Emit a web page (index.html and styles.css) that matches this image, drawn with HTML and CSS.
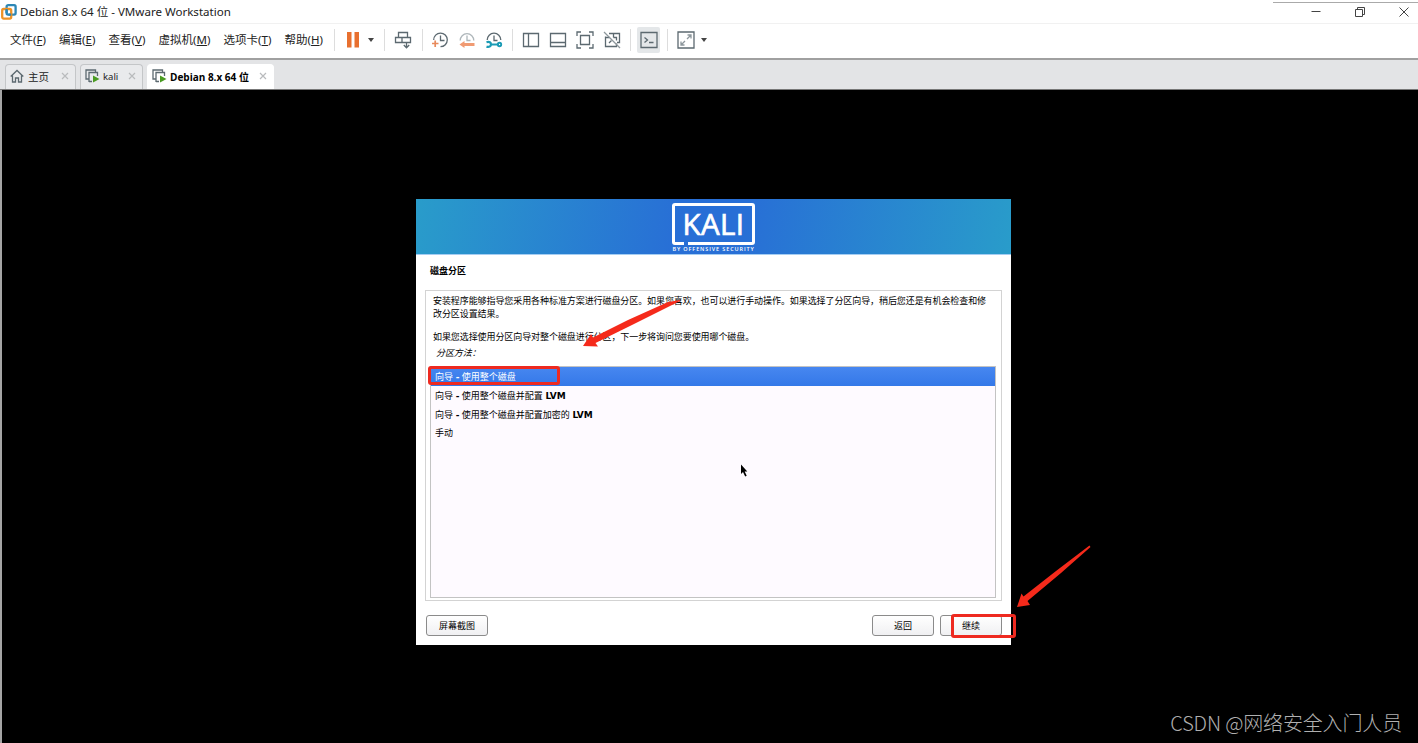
FILE: index.html
```html
<!DOCTYPE html>
<html lang="zh-CN">
  <head>
    <meta charset="UTF-8" />
    <meta name="viewport" content="width=device-width, initial-scale=1.0" />
    <title>Debian 8.x 64 位 - VMware Workstation</title>
    <link rel="stylesheet" href="styles.css">
  </head>
  <body>
    <div class="window">
      <header class="titlebar">
        <svg class="app-icon" width="16" height="16" viewBox="0 0 16 16" fill="none" stroke-width="2.3">
          <rect x="5.6" y="1.2" width="9" height="9.4" rx="1.5" stroke="#2d87b5" />
          <rect x="1.2" y="5" width="9" height="9.6" rx="1.5" stroke="#ee9326" />
          <path d="M5.6 9V5M10.2 10.6h-2.6" stroke="#2d87b5" />
        </svg>
        <span class="title">Debian 8.x 64 位 - VMware Workstation</span>
        <div class="controls">
          <svg width="12" height="12" viewBox="0 0 12 12"><path d="M1.5 5.5h9" /></svg>
          <svg width="12" height="12" viewBox="0 0 12 12"><path d="M1.5 3.5h7v7h-7zM3.5 3.2V1.5h7v7H8.8" /></svg>
          <svg width="12" height="12" viewBox="0 0 12 12"><path d="M1.5 1.5l9 9M10.5 1.5l-9 9" /></svg>
        </div>
      </header>

      <div class="menubar">
        <nav class="menu">
          <span>文件(<u>F</u>)</span>
          <span>编辑(<u>E</u>)</span>
          <span>查看(<u>V</u>)</span>
          <span>虚拟机(<u>M</u>)</span>
          <span>选项卡(<u>T</u>)</span>
          <span>帮助(<u>H</u>)</span>
        </nav>
        <div class="tools group-power">
          <svg width="14" height="16" viewBox="0 0 14 16"><path d="M1 0h4.500v15.500H1zM8.500 0H13v15.500H8.500z" fill="#e8702f" /></svg>
          <i class="caret"></i>
        </div>
        <div class="tools group-send">
          <svg class="line" width="18" height="18" viewBox="0 0 18 18">
            <path d="M4.500 6.500v-5h9v5M1.500 6.500h6.500v5H1.500zM8 6.500h8.500v5H8zM12.500 12v4.500M9.800 14l2.700 2.800 2.700-2.800" />
          </svg>
        </div>
        <div class="tools group-snap">
          <svg class="line" width="18" height="18" viewBox="0 0 18 18">
            <path d="M2.700 9A6.800 6.800 0 1 1 9.500 15.700M9.500 4.500v5h4" />
            <path d="M1 12.500h6.500M4.200 9.500v6.500" stroke="#e88a5c" stroke-width="1.700" />
          </svg>
          <svg class="line" width="18" height="18" viewBox="0 0 18 18">
            <path d="M2.200 9.500a6.800 6.800 0 1 1 13.600 0M9 4.500v5h3.500" stroke="#aeb6ba" />
            <path d="M16.500 13.500H5" stroke="#f09a72" stroke-width="3" />
            <path d="M6.500 10v7L1.500 13.500z" fill="#f09a72" stroke="none" />
          </svg>
          <svg class="line" width="18" height="18" viewBox="0 0 18 18">
            <path d="M2.200 9a6.800 6.800 0 1 1 13.600 0M9 4.500v5h3.500" />
            <path d="M1.500 11.200c3-1 4.500.5 4.500 2.300s-2 3-4.500 2.100M6 13.500h8" stroke="#1a9bb5" stroke-width="2.200" />
            <circle cx="14.500" cy="13.500" r="1.700" stroke="#1a9bb5" stroke-width="1.900" />
          </svg>
        </div>
        <div class="tools group-view">
          <svg class="line" width="18" height="18" viewBox="0 0 18 18"><path d="M1.500 2.500h15v13h-15zM6.500 2.500v13" /></svg>
          <svg class="line" width="18" height="18" viewBox="0 0 18 18"><path d="M1.500 2.500h15v13h-15zM1.500 11.500h15" /></svg>
          <svg class="line" width="18" height="18" viewBox="0 0 18 18">
            <path d="M1 5V1h4M13 1h4v4M17 13v4h-4M5 17H1v-4M4.500 4.500h9v9h-9z" />
          </svg>
          <svg class="line" width="18" height="18" viewBox="0 0 18 18">
            <path d="M6 2.500h10.500v9H14M2.500 5.500v10h11v-3M2.500 6.500h4M10.500 2.500v4M10.500 6.500h3v3M6 12l2.500-2.500" />
            <path d="M1 1l16 16" stroke="#8d979c" />
          </svg>
        </div>
        <div class="tools group-console">
          <span class="pressed">
            <svg class="line" width="18" height="18" viewBox="0 0 18 18">
              <path d="M1 1.500h16v15H1zM4.500 6.500l3 2.500-3 2.500M9 11.500h4.500" />
            </svg>
          </span>
        </div>
        <div class="tools group-full">
          <svg class="line" width="18" height="18" viewBox="0 0 18 18">
            <path d="M1 1h16v16H1z" />
            <path d="M10 8l4-4M10.500 4H14v3.500M8 10l-4 4M4 10.500V14h3.500" stroke="#8d979c" />
          </svg>
          <i class="caret"></i>
        </div>
      </div>

      <div class="tabs">
        <div class="tab tab-home">
          <svg class="line" width="14" height="14" viewBox="0 0 14 14"><path d="M.7 7.500L7 1.500l6.300 6M2.500 6.500v6.500h3V9h3v4h3V6.500" /></svg>
          <span>主页</span>
          <svg class="close" width="8" height="8" viewBox="0 0 8 8"><path d="M1 1l6 6M7 1L1 7" /></svg>
        </div>
        <div class="tab tab-kali">
          <svg class="line" width="15" height="14" viewBox="0 0 15 14">
            <path d="M3.500 10H1V1h9.500v2M4 13V3.500h8.500V7M4 12.500h3" />
            <path d="M8 6.500l6.500 3.500L8 13.500z" fill="#4a9b22" stroke="none" />
          </svg>
          <span>kali</span>
          <svg class="close" width="8" height="8" viewBox="0 0 8 8"><path d="M1 1l6 6M7 1L1 7" /></svg>
        </div>
        <div class="tab tab-debian active">
          <svg class="line" width="15" height="14" viewBox="0 0 15 14">
            <path d="M3.500 10H1V1h9.500v2M4 13V3.500h8.500V7M4 12.500h3" />
            <path d="M8 6.500l6.500 3.500L8 13.500z" fill="#4a9b22" stroke="none" />
          </svg>
          <span>Debian 8.x 64 位</span>
          <svg class="close" width="8" height="8" viewBox="0 0 8 8"><path d="M1 1l6 6M7 1L1 7" /></svg>
        </div>
      </div>

      <main class="screen">
        <section class="installer">
          <div class="banner">
            <div class="logo">KALI</div>
            <div class="tagline">BY OFFENSIVE SECURITY</div>
          </div>
          <h1>磁盘分区</h1>
          <div class="panel">
            <p>安装程序能够指导您采用各种标准方案进行磁盘分区。如果您喜欢，也可以进行手动操作。如果选择了分区向导，稍后您还是有机会检查和修<br />改分区设置结果。</p>
            <p>如果您选择使用分区向导对整个磁盘进行分区，下一步将询问您要使用哪个磁盘。</p>
            <p class="label">分区方法：</p>
            <ul class="options">
              <li class="selected">向导 <b>-</b> 使用整个磁盘</li>
              <li>向导 <b>-</b> 使用整个磁盘并配置 <b>LVM</b></li>
              <li>向导 <b>-</b> 使用整个磁盘并配置加密的 <b>LVM</b></li>
              <li>手动</li>
            </ul>
          </div>
          <div class="actions">
            <button class="btn">屏幕截图</button>
            <button class="btn back">返回</button>
            <button class="btn">继续</button>
          </div>

          <!-- annotations drawn over the dialog -->
          <div class="mark mark-option"></div>
          <div class="mark mark-continue"></div>
          <svg class="arrow arrow-option" width="100" height="50" viewBox="0 0 100 50">
            <path d="M98 0L86 2 46 20 11 37.500 9 34 1 46l15 .5-2.500-3.500L50 25 98 1z" />
          </svg>
          <svg class="arrow arrow-continue" width="76" height="64" viewBox="0 0 76 64">
            <path d="M73.500 .5L40 26 7.500 51.500 5.500 48.500 1 62l13-2-2.500-4L45 28 74.500 2z" />
          </svg>
          <svg class="cursor" width="8" height="13" viewBox="0 0 8 13"><path d="M1 .5v9.500l2-2 2.200 4.500 1.500-.8-2-4.200h2.600z" /></svg>
        </section>
        <div class="watermark">CSDN @网络安全入门人员</div>
      </main>
    </div>
  </body>
</html>
```
FILE: styles.css
```css
* {
  padding: 0;
  margin: 0;
  box-sizing: border-box;
}

body {
  font-family: "Noto Sans", "Noto Sans CJK SC", sans-serif;
  color: #222;
  overflow: hidden;
}

svg {
  display: block;
  flex: none;
}

.window {
  width: 1418px;
  height: 743px;
  display: flex;
  flex-direction: column;
  background-color: #fff;
}

.titlebar {
  position: relative;
  height: 24px;
  display: flex;
  align-items: center;
  padding: 0 8px 0 1px;
  border-bottom: 1px solid #f1f1f1;
  font-size: 11.55px;
  white-space: nowrap;
}

/* edge of the window behind */
.titlebar::after {
  content: "";
  position: absolute;
  top: 0;
  right: 0;
  width: 145px;
  height: 2px;
  border-bottom: 1px solid #aaa;
}

.title {
  margin: -1px 0 0 3px;
}

.controls {
  display: flex;
  gap: 32px;
  margin-left: auto;
}

.controls svg {
  fill: none;
  stroke: #444;
  stroke-width: 1;
}

.menubar {
  height: 34px;
  display: flex;
  align-items: center;
  padding: 0 0 2px 10px;
}

.menu {
  display: flex;
  gap: 13.2px;
  width: 324px;
  margin-top: -2px;
  font-size: 11.5px;
  white-space: nowrap;
}

u {
  text-underline-offset: 1px;
}

.tools {
  height: 22px;
  display: flex;
  align-items: center;
  border-left: 1px solid #ddd;
}

.group-power {
  width: 50px;
  padding-left: 11px;
  gap: 8px;
}

.group-send {
  width: 38px;
  padding-left: 9px;
}

.group-snap {
  width: 90px;
  padding-left: 8px;
  gap: 9px;
}

.group-view {
  width: 118px;
  padding-left: 9px;
  gap: 9px;
}

.group-console {
  width: 37px;
  padding-left: 6px;
}

.group-full {
  padding-left: 9px;
  gap: 6px;
}

.line {
  fill: none;
  stroke: #5c6970;
  stroke-width: 1.3;
}

.pressed {
  width: 23px;
  height: 26px;
  display: flex;
  align-items: center;
  justify-content: center;
  background-color: #e4e7e9;
  border-radius: 2px;
}

.caret {
  border: 3.5px solid transparent;
  border-top: 4px solid #444;
  border-bottom: 0;
}

.tabs {
  height: 32px;
  display: flex;
  align-items: flex-end;
  gap: 4px;
  padding-left: 5px;
  background-color: #e3e4e6;
  border-top: 2px solid #a0a0a0;
  border-bottom: 1px solid #777;
}

.tab {
  height: 25px;
  display: flex;
  align-items: center;
  padding: 0 6px 2px 4px;
  border: 1px solid #c4c6c8;
  border-bottom: 0;
  border-radius: 4px 4px 0 0;
  background-color: #e9eaec;
  font-size: 10.5px;
  white-space: nowrap;
}

.tab span {
  margin-left: 4px;
}

.tab-home {
  width: 71px;
}

.tab-kali {
  width: 63px;
  font-size: 9.5px;
}

.tab-kali span {
  margin-left: 3px;
}

.tab-debian {
  width: 127px;
}

.active {
  background-color: #fff;
  border-color: #fff;
  color: #000;
  font-family: "Open Sans", "Noto Sans CJK SC", sans-serif;
  font-weight: bold;
  font-size: 10px;
}

.active span {
  margin-left: 3px;
}

.close {
  margin-left: auto;
  stroke: #b9bbbd;
  stroke-width: 1.2;
}

.screen {
  flex: 1;
  position: relative;
  display: flex;
  align-items: flex-start;
  padding: 109px 0 0 414px;
  background-color: #000;
  border-left: 2px solid #a5a5a5;
}

.installer {
  position: relative;
  width: 595px;
  height: 446px;
  background-color: #fff;
  color: #000;
  font-size: 9px;
}

.banner {
  height: 56px;
  display: flex;
  flex-direction: column;
  align-items: center;
  padding-top: 4px;
  background: linear-gradient(100deg, #299cca, #286fd6 44%, #286fd6 55%, #299cca);
  border-bottom: 1px solid #a5cdf2;
  color: #fff;
}

.logo {
  position: relative;
  width: 83px;
  height: 42px;
  border: 3px solid #fff;
  border-radius: 3px;
  font: 500 29.5px/35px "Open Sans", sans-serif;
  letter-spacing: 0.4px;
  -webkit-text-stroke: 0.7px #fff;
  text-align: center;
}

/* gap in the bottom edge of the logo frame */
.logo::after {
  content: "";
  position: absolute;
  left: 9px;
  bottom: -3px;
  width: 4px;
  height: 3px;
  background-color: #286fd6;
}

.tagline {
  font: 600 5.5px/8px "Open Sans", sans-serif;
  letter-spacing: 0.88px;
  white-space: nowrap;
}

h1 {
  padding: 9px 0 0 14px;
  height: 35px;
  font-size: 9px;
  line-height: 13px;
}

.panel {
  width: 577px;
  height: 311px;
  margin-left: 9px;
  padding: 3px 5px 0 4px;
  border: 1px solid #d3d3d3;
}

.panel p {
  padding-left: 3px;
  margin-bottom: 10px;
  line-height: 13px;
  letter-spacing: -0.08px;
  white-space: nowrap;
}

.panel .label {
  margin: -7px 0 7px 3px;
  font-style: italic;
}

.options {
  height: 232px;
  border: 1px solid #c3c3c3;
  background-color: #fefaff;
  list-style: none;
}

.options li {
  height: 18.5px;
  padding-left: 4px;
  line-height: 20px;
  white-space: pre;
}

.options b {
  margin-left: 0.3px;
  font-family: "DejaVu Sans";
}

.options .selected {
  height: 19px;
  line-height: 20px;
  color: #fff;
  background: linear-gradient(#4787f0, #3478e8);
}

.actions {
  display: flex;
  gap: 6px;
  padding: 14px 9px 0 10px;
}

.btn {
  width: 62px;
  height: 21px;
  border: 1px solid #8b8b8b;
  border-radius: 3px;
  background: linear-gradient(#fff, #f0f0f2);
  font-family: inherit;
  font-size: 9px;
  color: #000;
}

.back {
  margin-left: auto;
}

.mark {
  position: absolute;
  border: 3px solid #ee2a20;
  border-radius: 3px;
}

.mark-option {
  left: 12px;
  top: 167px;
  width: 132px;
  height: 19px;
}

.mark-continue {
  left: 535px;
  top: 415px;
  width: 65px;
  height: 24px;
}

.arrow {
  position: absolute;
  fill: #f52a1b;
}

.arrow-option {
  left: 166px;
  top: 101px;
}

.arrow-continue {
  left: 600px;
  top: 346px;
}

.cursor {
  position: absolute;
  left: 324px;
  top: 265px;
}

.watermark {
  position: absolute;
  right: 16px;
  bottom: 5px;
  color: #b0b0b0;
  font-family: "Noto Sans CJK SC", sans-serif;
  font-size: 20px;
  font-weight: 300;
  line-height: 30px;
  letter-spacing: -0.15px;
  white-space: nowrap;
}
```
